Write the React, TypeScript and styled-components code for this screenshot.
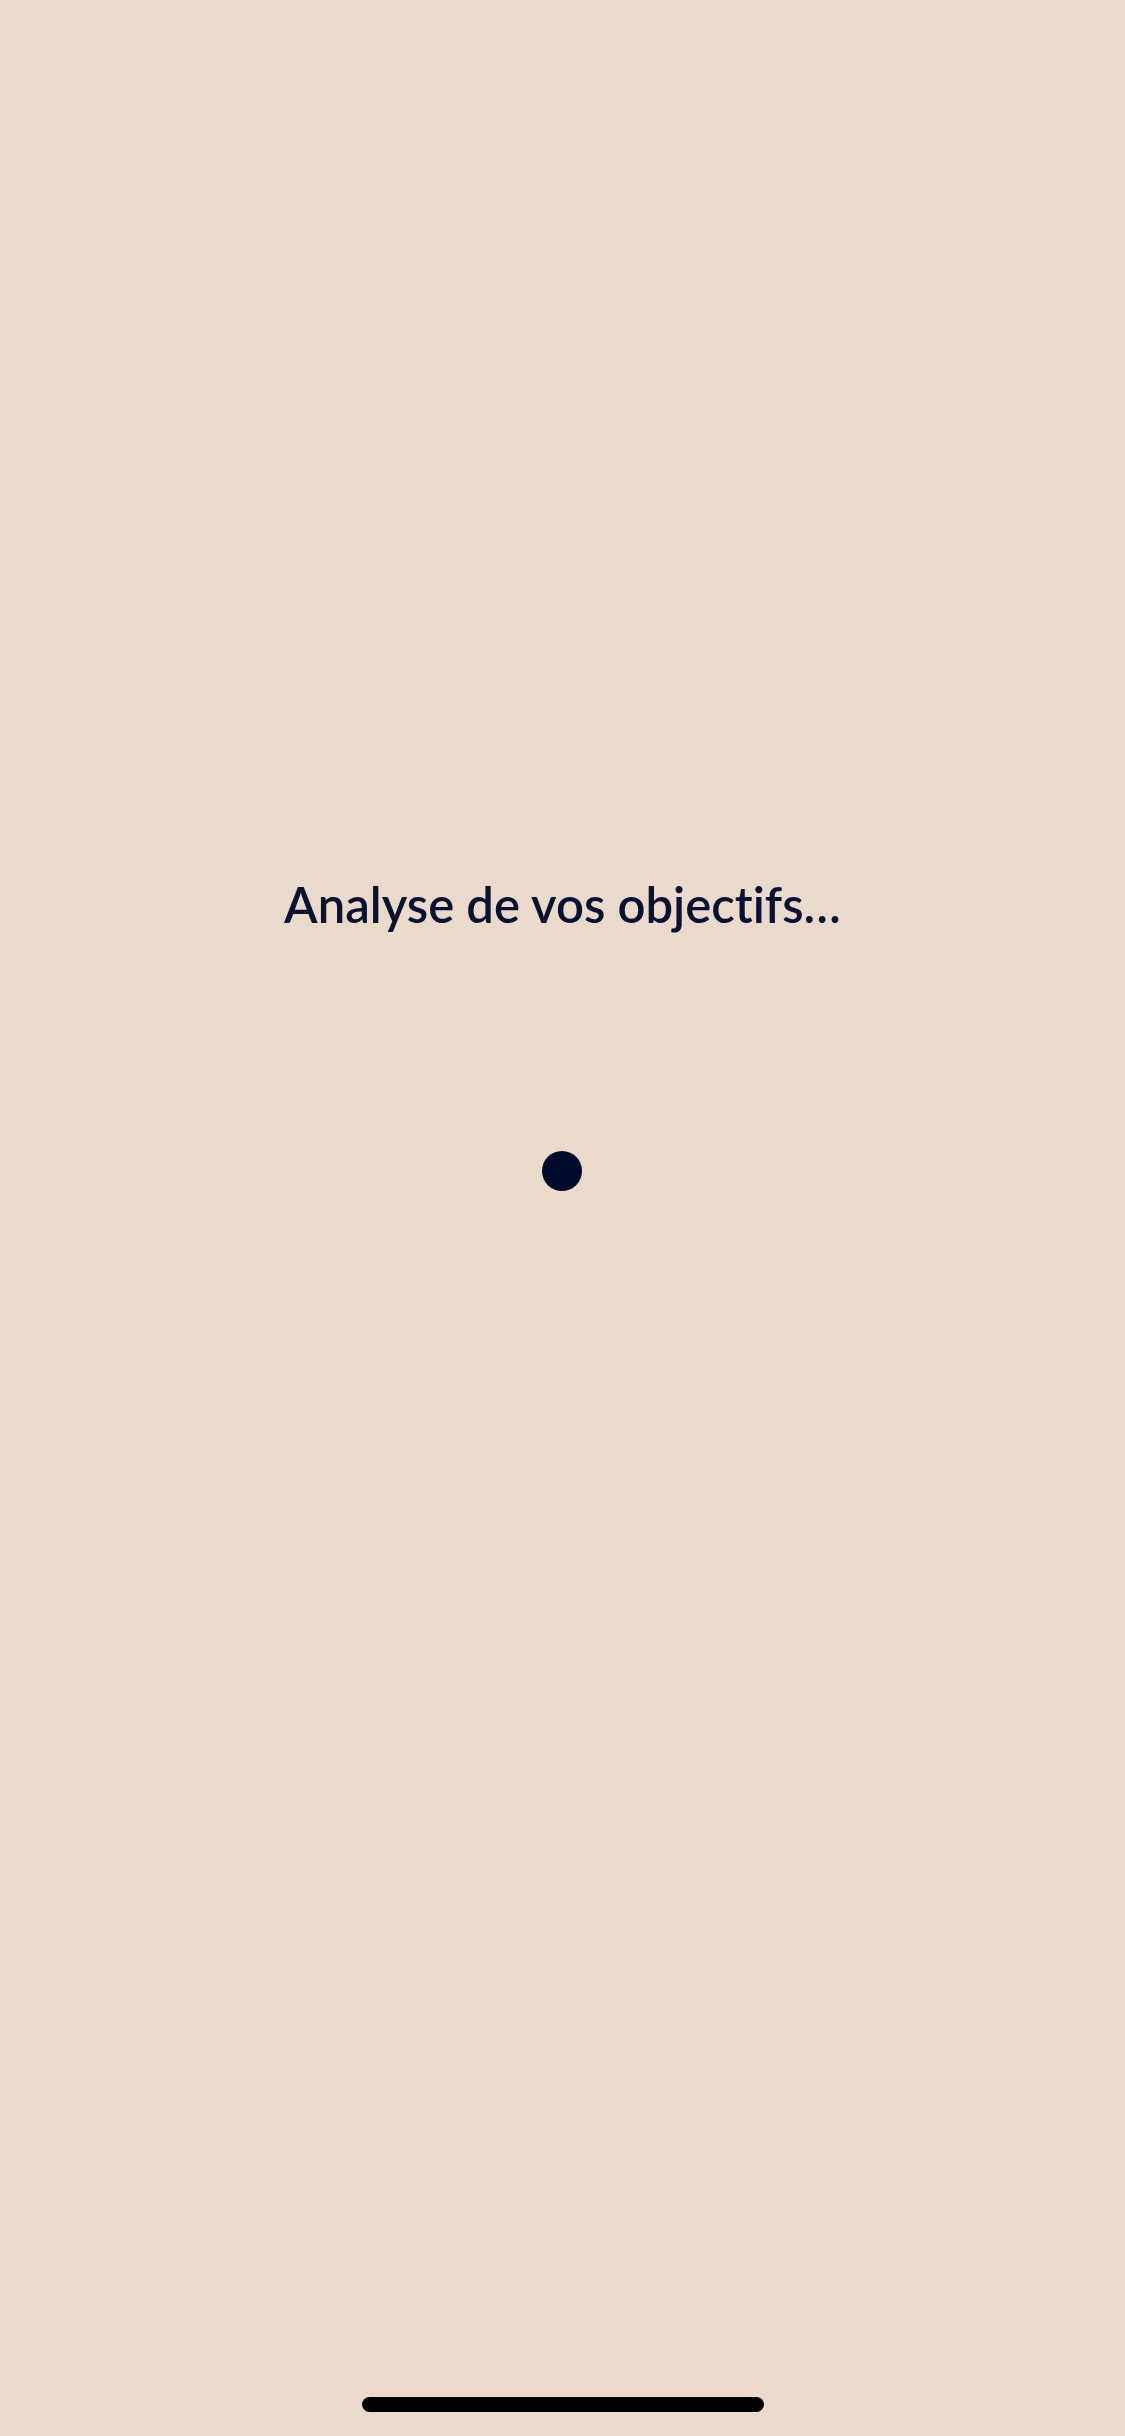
import styled, { createGlobalStyle } from 'styled-components'

const Global = createGlobalStyle`
  html, body {
    margin: 0;
    padding: 0;
    background: #e9dacb;
  }
`

const App = () => {
  return (
    <Screen>
      <Global />
      <Content>
        <Title>Analyse de vos objectifs…</Title>
        <Dot />
      </Content>
      <HomeBar />
    </Screen>
  )
}

export default App

const Screen = styled.div`
  width: 1125px;
  height: 2436px;
  background: #e9dacb;
  display: flex;
  flex-direction: column;
  align-items: center;
  box-sizing: border-box;
  padding-top: 864px;
  padding-bottom: 24px;
`
const Content = styled.div`
  flex: 1;
  display: flex;
  flex-direction: column;
  align-items: center;
`
const Title = styled.h1`
  margin: 0;
  color: #0b1130;
  font-family: Lato, 'Noto Sans', sans-serif;
  font-size: 49px;
  font-weight: 600;
  line-height: 80px;
  letter-spacing: 0;
  font-variant-ligatures: none;
  font-feature-settings: 'liga' off, 'clig' off;
`
const Dot = styled.div`
  margin-top: 207px;
  width: 40px;
  height: 40px;
  border-radius: 50%;
  background: #020b2c;
`
const HomeBar = styled.div`
  width: 402px;
  height: 15px;
  border-radius: 8px;
  background: #000;
`
